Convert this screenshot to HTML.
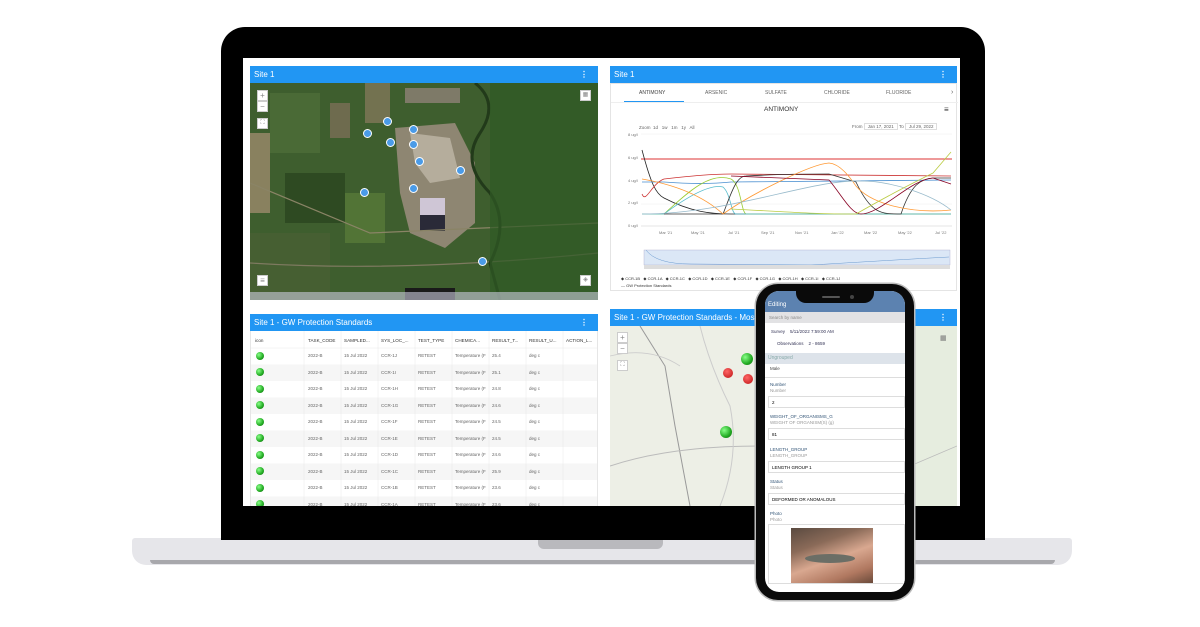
<!DOCTYPE html>
<html><head><meta charset="utf-8"><style>
*{margin:0;padding:0;box-sizing:border-box}
body{width:1200px;height:627px;background:#fff;position:relative;overflow:hidden;font-family:"Liberation Sans",sans-serif}
.a{position:absolute}
.hdr{position:absolute;background:#2196f3;color:#fff;font-size:8px;padding:0 4px;line-height:17px}
.hdr b{position:absolute;right:10px;top:0;font-weight:bold}
.t{font-size:5px;color:#666;position:absolute;white-space:nowrap}
.dot{position:absolute;width:9px;height:9px;border-radius:50%;background:#4a9be8;border:1.5px solid #fff}
.g{position:absolute;width:8px;height:8px;border-radius:50%;background:radial-gradient(circle at 35% 35%,#8f8,#2a2 60%,#161)}
.btn{position:absolute;width:11px;height:11px;background:#fff;border:1px solid #ccc;font-size:8px;line-height:9px;text-align:center;color:#888}
.pf{position:absolute;left:0;right:0;font-size:4.5px;padding-left:5px}
</style></head><body>
<div class="a" style="left:132px;top:538px;width:940px;height:27px;background:#e6e6ea;border-radius:3px 3px 14px 14px"></div>
<div class="a" style="left:150px;top:560px;width:905px;height:4px;background:#a8a8ac;border-radius:0 0 8px 8px"></div>
<div class="a" style="left:538px;top:538px;width:125px;height:11px;background:#b9b9bd;border-radius:0 0 6px 6px"></div>
<div class="a" style="left:221px;top:27px;width:764px;height:513px;background:#000;border-radius:24px 24px 0 0"></div>
<div class="a" style="left:243px;top:58px;width:717px;height:448px;background:#fff;overflow:hidden"></div>
<!-- top-left panel -->
<div class="hdr" style="left:250px;top:66px;width:348px;height:17px">Site 1<b>⋮</b></div>
<div class="a" style="left:250px;top:83px;width:348px;height:217px;overflow:hidden;background:#35552a">
<svg width="348" height="217" style="position:absolute;left:0;top:0">
<rect x="0" y="0" width="348" height="217" fill="#3e5e2e"/>
<rect x="0" y="50" width="20" height="80" fill="#9c8a6c" opacity=".8"/>
<rect x="20" y="10" width="50" height="60" fill="#4a6a36"/>
<rect x="80" y="20" width="20" height="35" fill="#7a6e56" opacity=".8"/>
<rect x="115" y="0" width="25" height="40" fill="#8a7a60" opacity=".7"/>
<rect x="35" y="90" width="60" height="50" fill="#2e4a22"/>
<rect x="95" y="110" width="40" height="50" fill="#527436"/>
<rect x="0" y="150" width="80" height="67" fill="#465f32"/>
<path d="M145 45 L205 40 L225 80 L225 140 L195 165 L160 150 L150 110Z" fill="#8e8672"/>
<path d="M160 50 L200 55 L210 95 L180 100 L165 80Z" fill="#b5ad9c"/>
<rect x="170" y="115" width="25" height="17" fill="#cfc6d6"/>
<rect x="170" y="132" width="25" height="16" fill="#2a2a38"/>
<rect x="155" y="5" width="55" height="15" fill="#7e7a68"/>
<rect x="155" y="205" width="50" height="12" fill="#1a1a1a"/>
<path d="M0 100 L120 150 L348 140" stroke="#8a8466" stroke-width="1.2" fill="none"/>
<path d="M0 180 Q150 190 348 170" stroke="#7e7a60" stroke-width="1.2" fill="none"/>
<path d="M225 0 Q250 20 230 50 Q210 80 240 110 Q260 140 240 180 L250 217" stroke="#223a1a" stroke-width="3" fill="none"/>
<rect x="240" y="0" width="108" height="217" fill="#2f5a25" opacity=".7"/>
<rect x="0" y="209" width="348" height="8" fill="#ccd" opacity=".6"/>
</svg>
<div class="btn" style="left:7px;top:7px">+</div><div class="btn" style="left:7px;top:18px">−</div>
<div class="btn" style="left:7px;top:35px;font-size:6px">⛶</div>
<div class="btn" style="left:330px;top:7px;font-size:6px">▦</div>
<div class="btn" style="left:7px;top:192px">≡</div>
<div class="btn" style="left:330px;top:192px;font-size:6px">◈</div>
<div class="dot" style="left:113px;top:46px"></div><div class="dot" style="left:133px;top:34px"></div>
<div class="dot" style="left:159px;top:42px"></div><div class="dot" style="left:136px;top:55px"></div>
<div class="dot" style="left:159px;top:57px"></div><div class="dot" style="left:165px;top:74px"></div>
<div class="dot" style="left:206px;top:83px"></div><div class="dot" style="left:159px;top:101px"></div>
<div class="dot" style="left:110px;top:105px"></div><div class="dot" style="left:228px;top:174px"></div>
</div>
<!-- top-right chart -->
<div class="hdr" style="left:610px;top:66px;width:347px;height:17px">Site 1<b>⋮</b></div>
<div class="a" style="left:610px;top:83px;width:347px;height:208px;background:#fff;border:1px solid #e4e4e4">
<div class="t" style="left:28px;top:6px;color:#444">ANTIMONY</div>
<div class="t" style="left:94px;top:6px">ARSENIC</div><div class="t" style="left:154px;top:6px">SULFATE</div>
<div class="t" style="left:213px;top:6px">CHLORIDE</div><div class="t" style="left:275px;top:6px">FLUORIDE</div>
<div class="t" style="left:340px;top:5px;font-size:7px">›</div>
<div class="a" style="left:13px;top:17px;width:60px;height:1px;background:#2196f3"></div>
<div class="a" style="left:0;top:18px;width:347px;height:1px;background:#eee"></div>
<div class="t" style="left:153px;top:22px;font-size:6.5px;color:#333">ANTIMONY</div>
<div class="t" style="left:333px;top:21px;font-size:8px;color:#333">≡</div>
<div class="t" style="left:28px;top:41px;font-size:4.5px">Zoom &nbsp;1d &nbsp; 1w &nbsp; 1m &nbsp; 1y &nbsp; All</div>
<div class="t" style="left:241px;top:40px;font-size:4.5px">From <span style="border:1px solid #ddd;padding:0 3px">Jan 17, 2021</span> To <span style="border:1px solid #ddd;padding:0 3px">Jul 29, 2022</span></div>
<svg width="347" height="208" style="position:absolute;left:0;top:0" font-family="Liberation Sans" font-size="4" fill="#777">
<text x="17" y="52">8 ug/l</text><text x="17" y="75">6 ug/l</text><text x="17" y="98">4 ug/l</text><text x="17" y="120">2 ug/l</text><text x="17" y="143">0 ug/l</text>
<line x1="30" y1="50" x2="341" y2="50" stroke="#eee" stroke-width=".5"/><line x1="30" y1="120" x2="341" y2="120" stroke="#eee" stroke-width=".5"/>
<line x1="30" y1="142" x2="341" y2="142" stroke="#ccc" stroke-width=".5"/>
<line x1="30" y1="75" x2="341" y2="75" stroke="#d33" stroke-width="1"/>
<g fill="none" stroke-width=".8">
<path d="M31 66 C40 100 45 110 53 114 C80 128 100 130 120 130 L340 130" stroke="#222"/>
<path d="M31 98 L53 98 C80 100 100 100 120 98 L340 96" stroke="#4a8fd0"/>
<path d="M31 130 L53 130 C80 105 100 88 120 95 C130 100 130 128 135 130 L340 130" stroke="#9c3"/>
<path d="M31 110 C35 120 40 100 53 95 C80 92 100 90 120 90 L340 92" stroke="#c33"/>
<path d="M31 130 L53 130 C80 110 100 100 112 103 C120 110 120 130 125 130 L340 130" stroke="#5bc"/>
<path d="M53 130 L112 130 C120 110 125 92 135 92 C170 90 200 90 218 90 L245 98 C260 130 270 130 290 130 C300 100 310 95 322 94 L340 94" stroke="#333"/>
<path d="M31 95 C60 100 90 110 112 130 C140 110 200 80 218 79 C230 80 240 95 245 102 C260 120 300 130 340 126" stroke="#f93"/>
<path d="M31 130 C120 130 200 95 250 97 C280 97 320 110 340 126" stroke="#9bc"/>
<path d="M120 92 L218 96 C230 110 240 130 250 130 C270 130 300 95 322 94 L340 100" stroke="#802"/>
<path d="M120 125 C180 128 200 130 245 130 C280 110 300 100 322 89 L340 68" stroke="#bc4"/>
</g>
<text x="48" y="150">Mar '21</text><text x="80" y="150">May '21</text><text x="117" y="150">Jul '21</text><text x="150" y="150">Sep '21</text><text x="184" y="150">Nov '21</text><text x="220" y="150">Jan '22</text><text x="253" y="150">Mar '22</text><text x="287" y="150">May '22</text><text x="324" y="150">Jul '22</text>
<rect x="33" y="166" width="306" height="15" fill="#dbe7f6" stroke="#aac" stroke-width=".4"/>
<path d="M35 166 Q45 180 80 180 L200 181 Q300 175 338 173" stroke="#6a9ad0" stroke-width=".5" fill="none"/>
<rect x="33" y="181" width="306" height="4" fill="#ddd"/>
<g font-size="4" fill="#333">
<text x="10" y="196" xml:space="preserve">◆ CCR-1B   ◆ CCR-1A   ◆ CCR-1C   ◆ CCR-1D   ◆ CCR-1E   ◆ CCR-1F   ◆ CCR-1G   ◆ CCR-1H   ◆ CCR-1I   ◆ CCR-1J</text>
<text x="10" y="203">— GW Protection Standards</text></g>
</svg>
</div>
<!-- bottom-left table -->
<div class="hdr" style="left:250px;top:314px;width:348px;height:17px">Site 1 - GW Protection Standards<b>⋮</b></div>
<div class="a" style="left:250px;top:331px;width:348px;height:175px;background:#fff;border-left:1px solid #e6e6e6;border-right:1px solid #e6e6e6;overflow:hidden">
<svg width="348" height="175" style="position:absolute;left:0;top:0" font-family="Liberation Sans" font-size="4.3" fill="#777">
<rect x="0" y="33.5" width="348" height="16.5" fill="#f6f6f6"/><rect x="0" y="66.5" width="348" height="16.5" fill="#f6f6f6"/><rect x="0" y="99.5" width="348" height="16.5" fill="#f6f6f6"/><rect x="0" y="132.5" width="348" height="16.5" fill="#f6f6f6"/><rect x="0" y="165.5" width="348" height="16.5" fill="#f6f6f6"/>
<g stroke="#e8e8e8" stroke-width=".5"><line x1="53" y1="0" x2="53" y2="175"/><line x1="90" y1="0" x2="90" y2="175"/><line x1="127" y1="0" x2="127" y2="175"/><line x1="164" y1="0" x2="164" y2="175"/><line x1="201" y1="0" x2="201" y2="175"/><line x1="238" y1="0" x2="238" y2="175"/><line x1="275" y1="0" x2="275" y2="175"/><line x1="312" y1="0" x2="312" y2="175"/><line x1="0" y1="17" x2="348" y2="17"/></g>
<g fill="#333" font-size="4.6"><text x="4" y="11">icon</text><text x="57" y="11">TASK_CODE</text><text x="93" y="11">SAMPLED...</text><text x="130" y="11">SYS_LOC_...</text><text x="167" y="11">TEST_TYPE</text><text x="204" y="11">CHEMICA...</text><text x="241" y="11">RESULT_T...</text><text x="278" y="11">RESULT_U...</text><text x="315" y="11">ACTION_L...</text></g>
</svg>
<div class="g" style="left:5px;top:21px"></div><div class="g" style="left:5px;top:37px"></div><div class="g" style="left:5px;top:54px"></div><div class="g" style="left:5px;top:70px"></div><div class="g" style="left:5px;top:87px"></div><div class="g" style="left:5px;top:103px"></div><div class="g" style="left:5px;top:120px"></div><div class="g" style="left:5px;top:136px"></div><div class="g" style="left:5px;top:153px"></div><div class="g" style="left:5px;top:169px"></div>
<div class="t" style="left:57px;top:17px;line-height:16.5px;font-size:4.5px">2022-B<br>2022-B<br>2022-B<br>2022-B<br>2022-B<br>2022-B<br>2022-B<br>2022-B<br>2022-B<br>2022-B</div>
<div class="t" style="left:93px;top:17px;line-height:16.5px;font-size:4.5px">15 Jul 2022<br>15 Jul 2022<br>15 Jul 2022<br>15 Jul 2022<br>15 Jul 2022<br>15 Jul 2022<br>15 Jul 2022<br>15 Jul 2022<br>15 Jul 2022<br>15 Jul 2022</div>
<div class="t" style="left:130px;top:17px;line-height:16.5px;font-size:4.5px">CCR-1J<br>CCR-1I<br>CCR-1H<br>CCR-1G<br>CCR-1F<br>CCR-1E<br>CCR-1D<br>CCR-1C<br>CCR-1B<br>CCR-1A</div>
<div class="t" style="left:167px;top:17px;line-height:16.5px;font-size:4.5px">RETEST<br>RETEST<br>RETEST<br>RETEST<br>RETEST<br>RETEST<br>RETEST<br>RETEST<br>RETEST<br>RETEST</div>
<div class="t" style="left:204px;top:17px;line-height:16.5px;font-size:4.5px">Temperature (F<br>Temperature (F<br>Temperature (F<br>Temperature (F<br>Temperature (F<br>Temperature (F<br>Temperature (F<br>Temperature (F<br>Temperature (F<br>Temperature (F</div>
<div class="t" style="left:241px;top:17px;line-height:16.5px;font-size:4.5px">25.4<br>25.1<br>24.8<br>24.6<br>24.5<br>24.5<br>24.6<br>25.9<br>23.6<br>23.6</div>
<div class="t" style="left:278px;top:17px;line-height:16.5px;font-size:4.5px">deg c<br>deg c<br>deg c<br>deg c<br>deg c<br>deg c<br>deg c<br>deg c<br>deg c<br>deg c</div>
</div>
<!-- bottom-right map -->
<div class="hdr" style="left:610px;top:309px;width:347px;height:17px">Site 1 - GW Protection Standards - Most R<b>⋮</b></div>
<div class="a" style="left:610px;top:326px;width:347px;height:180px;background:#eef0e8;overflow:hidden">
<svg width="347" height="180" style="position:absolute;left:0;top:0">
<rect width="347" height="180" fill="#edefe6"/>
<path d="M30 0 L55 40 L65 100 L80 180" stroke="#999" stroke-width="1" fill="none"/>
<path d="M0 140 Q60 120 150 120" stroke="#bbb" stroke-width="1" fill="none"/>
<path d="M90 0 Q100 40 120 80 Q130 130 110 180" stroke="#ccc" stroke-width="1" fill="none"/>
<path d="M0 30 Q40 20 70 40" stroke="#ccc" stroke-width=".8" fill="none"/>
<rect x="297" y="0" width="50" height="180" fill="#e6eddf"/>
<path d="M300 140 L347 120" stroke="#bbb" stroke-width=".8"/>
</svg>
<div class="btn" style="left:7px;top:6px">+</div><div class="btn" style="left:7px;top:17px">−</div>
<div class="btn" style="left:7px;top:34px;font-size:6px">⛶</div>
<div class="a" style="left:330px;top:8px;font-size:7px;color:#777">▦</div>
<div class="g" style="left:131px;top:27px;width:12px;height:12px"></div>
<div class="a" style="left:113px;top:42px;width:10px;height:10px;border-radius:50%;background:radial-gradient(circle at 40% 35%,#f66,#b11)"></div>
<div class="a" style="left:133px;top:48px;width:10px;height:10px;border-radius:50%;background:radial-gradient(circle at 40% 35%,#f66,#b11)"></div>
<div class="g" style="left:110px;top:100px;width:12px;height:12px"></div>
</div>
<!-- phone -->
<div class="a" style="left:756px;top:284px;width:158px;height:316px;background:#0a0a0a;border-radius:22px;box-shadow:0 0 0 1.5px #bbb"></div>
<div class="a" style="left:765px;top:291px;width:140px;height:301px;background:#fff;border-radius:14px;overflow:hidden">
<div class="a" style="left:0;top:0;width:140px;height:21px;background:#5c82b0"></div>
<div class="a" style="left:3px;top:11px;font-size:6px;color:#fff">Editing</div>
<div class="a" style="left:0;top:21px;width:140px;height:11px;background:#e2e2e4;font-size:4.5px;color:#888;padding:3px 4px">Search by name</div>
<div class="a" style="left:6px;top:38px;font-size:4.5px;color:#335">Survey &nbsp;&nbsp; 5/11/2022 7:59:00 AM</div>
<div class="a" style="left:12px;top:50px;font-size:4.5px;color:#335">Observations &nbsp;&nbsp; 2 - 8659</div>
<div class="a" style="left:0;top:62px;width:140px;height:11px;background:#dde3ea;font-size:5px;color:#8aa;padding:2px 3px">Ungrouped</div>
<div class="pf" style="top:75px;color:#444">Male</div>
<div class="a" style="left:0;top:86px;width:140px;height:1px;background:#ddd"></div>
<div class="pf" style="top:91px;color:#357">Number</div><div class="pf" style="top:97px;color:#999">Number</div>
<div class="a" style="left:3px;top:105px;width:137px;height:12px;border:1px solid #ddd;font-size:4.5px;padding:3px">2</div>
<div class="pf" style="top:123px;color:#357">WEIGHT_OF_ORGANISMS_G</div><div class="pf" style="top:129px;color:#999">WEIGHT OF ORGANISM(S) (g)</div>
<div class="a" style="left:3px;top:137px;width:137px;height:12px;border:1px solid #ddd;font-size:4.5px;padding:3px">81</div>
<div class="pf" style="top:156px;color:#357">LENGTH_GROUP</div><div class="pf" style="top:162px;color:#999">LENGTH_GROUP</div>
<div class="a" style="left:3px;top:170px;width:137px;height:12px;border:1px solid #ddd;font-size:4.5px;padding:3px">LENGTH GROUP 1</div>
<div class="pf" style="top:188px;color:#357">Status</div><div class="pf" style="top:194px;color:#999">Status</div>
<div class="a" style="left:3px;top:202px;width:137px;height:12px;border:1px solid #ddd;font-size:4.5px;padding:3px">DEFORMED OR ANOMALOUS</div>
<div class="pf" style="top:220px;color:#357">Photo</div><div class="pf" style="top:226px;color:#999">Photo</div>
<div class="a" style="left:3px;top:233px;width:137px;height:60px;border:1px solid #ddd"></div>
<div class="a" style="left:26px;top:237px;width:82px;height:55px;background:linear-gradient(160deg,#5a4a40 0%,#8a6a58 30%,#d9a890 55%,#b07860 80%,#6a4a3a 100%)"></div>
<div class="a" style="left:40px;top:263px;width:50px;height:9px;border-radius:50%;background:#6b6e66"></div>
</div>
<div class="a" style="left:796px;top:291px;width:78px;height:12px;background:#0a0a0a;border-radius:0 0 10px 10px"></div>
<div class="a" style="left:822px;top:296px;width:18px;height:2px;background:#555;border-radius:1px"></div>
<div class="a" style="left:850px;top:295px;width:4px;height:4px;background:#444;border-radius:50%"></div>
</body></html>
